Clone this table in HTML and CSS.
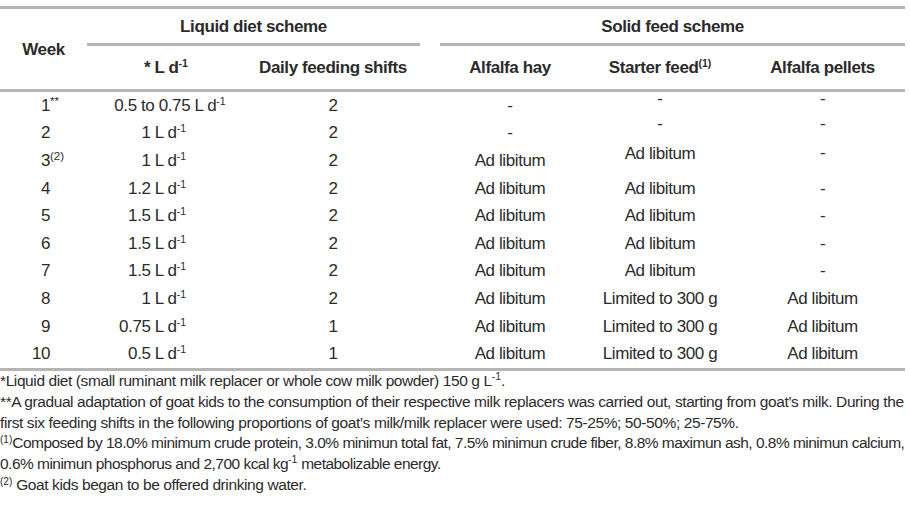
FILE: index.html
```html
<!DOCTYPE html>
<html lang="en">
<head>
<meta charset="utf-8">
<title>Feeding schemes</title>
<link rel="stylesheet" href="styles.css">
</head>
<body>
<div class="page">
  <table class="feed">
    <colgroup>
      <col class="c-week"><col class="c-ld"><col class="c-daily"><col class="c-hay"><col class="c-starter"><col class="c-pel">
    </colgroup>
    <thead>
      <tr class="h1">
        <th rowspan="2" class="week">Week</th>
        <th colspan="2" class="grp"><div class="grp-l">Liquid diet scheme</div></th>
        <th colspan="3" class="grp"><div class="grp-r">Solid feed scheme</div></th>
      </tr>
      <tr class="h2">
        <th>* L d<sup class="sp">-1</sup></th>
        <th class="daily">Daily feeding shifts</th>
        <th>Alfalfa hay</th>
        <th>Starter feed<sup class="sp">(1)</sup></th>
        <th>Alfalfa pellets</th>
      </tr>
    </thead>
    <tbody>
      <tr><td class="wk">1<sup class="sw">**</sup></td><td class="ld wide">0.5 to 0.75 L d<sup class="sp">-1</sup></td><td class="daily">2</td><td>-</td><td class="hi hi-a">-</td><td class="hi hi-a">-</td></tr>
      <tr><td class="wk">2</td><td class="ld">1 L d<sup class="sp">-1</sup></td><td class="daily">2</td><td>-</td><td class="hi hi-b">-</td><td class="hi hi-b">-</td></tr>
      <tr><td class="wk">3<sup class="sw">(2)</sup></td><td class="ld">1 L d<sup class="sp">-1</sup></td><td class="daily">2</td><td>Ad libitum</td><td class="hi hi-c">Ad libitum</td><td class="hi hi-d">-</td></tr>
      <tr><td class="wk">4</td><td class="ld">1.2 L d<sup class="sp">-1</sup></td><td class="daily">2</td><td>Ad libitum</td><td>Ad libitum</td><td>-</td></tr>
      <tr><td class="wk">5</td><td class="ld">1.5 L d<sup class="sp">-1</sup></td><td class="daily">2</td><td>Ad libitum</td><td>Ad libitum</td><td>-</td></tr>
      <tr><td class="wk">6</td><td class="ld">1.5 L d<sup class="sp">-1</sup></td><td class="daily">2</td><td>Ad libitum</td><td>Ad libitum</td><td>-</td></tr>
      <tr><td class="wk">7</td><td class="ld">1.5 L d<sup class="sp">-1</sup></td><td class="daily">2</td><td>Ad libitum</td><td>Ad libitum</td><td>-</td></tr>
      <tr><td class="wk">8</td><td class="ld">1 L d<sup class="sp">-1</sup></td><td class="daily">2</td><td>Ad libitum</td><td>Limited to 300 g</td><td>Ad libitum</td></tr>
      <tr><td class="wk">9</td><td class="ld">0.75 L d<sup class="sp">-1</sup></td><td class="daily">1</td><td>Ad libitum</td><td>Limited to 300 g</td><td>Ad libitum</td></tr>
      <tr><td class="wk">10</td><td class="ld">0.5 L d<sup class="sp">-1</sup></td><td class="daily">1</td><td>Ad libitum</td><td>Limited to 300 g</td><td>Ad libitum</td></tr>
    </tbody>
  </table>
  <div class="notes">
    <p>*Liquid diet (small ruminant milk replacer or whole cow milk powder) 150 g L<sup class="sp">-1</sup>.</p>
    <p>**A gradual adaptation of goat kids to the consumption of their respective milk replacers was carried out, starting from goat’s milk. During the<br>first six feeding shifts in the following proportions of goat’s milk/milk replacer were used: 75-25%; 50-50%; 25-75%.</p>
    <p class="tight"><sup class="sn">(1)</sup>Composed by 18.0% minimum crude protein, 3.0% minimun total fat, 7.5% minimun crude fiber, 8.8% maximun ash, 0.8% minimun calcium,<br>0.6% minimun phosphorus and 2,700 kcal kg<sup class="sp">-1</sup> metabolizable energy.</p>
    <p><sup class="sn">(2)</sup> Goat kids began to be offered drinking water.</p>
  </div>
</div>
</body>
</html>
```

FILE: styles.css
```css
html, body {
  margin: 0;
  padding: 0;
  background: #ffffff;
}

body {
  color: #2b2b2b;
  font-family: "Liberation Sans", Arial, sans-serif;
  font-size: 17px;
  letter-spacing: -0.4px;
}

.page {
  width: 905px;
  padding-top: 6px;
}

.feed {
  width: 905px;
  table-layout: fixed;
  border-collapse: collapse;
  border-top: 3px solid #b5b5b5;
  border-bottom: 3px solid #b5b5b5;
}

.c-week { width: 87px; }
.c-ld { width: 158px; }
.c-daily { width: 195px; }
.c-hay { width: 140px; }
.c-starter { width: 160px; }
.c-pel { width: 165px; }

th {
  font-weight: bold;
  padding: 0;
  text-align: center;
  vertical-align: middle;
}

th.week {
  border-bottom: 3px solid #b5b5b5;
  padding-top: 2px;
}

.h1 th.grp {
  height: 37px;
  vertical-align: top;
}

.grp-l,
.grp-r {
  height: 32px;
  padding-top: 2px;
  line-height: 32px;
  border-bottom: 3px solid #b5b5b5;
  text-align: center;
}

.grp-l {
  margin-right: 20px;
}

.h2 th {
  height: 43px;
  border-bottom: 3px solid #b5b5b5;
}

td {
  height: 27.6px;
  padding: 0;
  line-height: 20px;
  text-align: center;
  vertical-align: middle;
}

.daily {
  padding-right: 19px;
}

td.wk {
  text-align: right;
  padding-right: 37px;
}

td.ld {
  text-align: right;
  padding-right: 59px;
}

td.ld.wide {
  text-align: center;
  padding-right: 0;
  padding-left: 8px;
}

/* cells whose entry sits higher in its row in the source table */
td.hi {
  vertical-align: top;
}

td.hi-a { line-height: 14px; }
td.hi-b { line-height: 8px; }
td.hi-c { line-height: 13px; }
td.hi-d { line-height: 11px; }

sup {
  line-height: 0;
  font-size: 10.5px;
  letter-spacing: 0;
}

.sp {
  vertical-align: 6px;
}

.sw {
  display: inline-block;
  width: 0;
  vertical-align: 6px;
  text-align: left;
  font-size: 11.5px;
}

.sn {
  vertical-align: 5px;
  font-size: 10px;
}

.notes {
  padding-top: 0;
  line-height: 20.8px;
  font-size: 15.5px;
  letter-spacing: -0.4px;
}

.notes p {
  margin: 0;
  white-space: nowrap;
}

.notes p.tight {
  letter-spacing: -0.52px;
}
```
